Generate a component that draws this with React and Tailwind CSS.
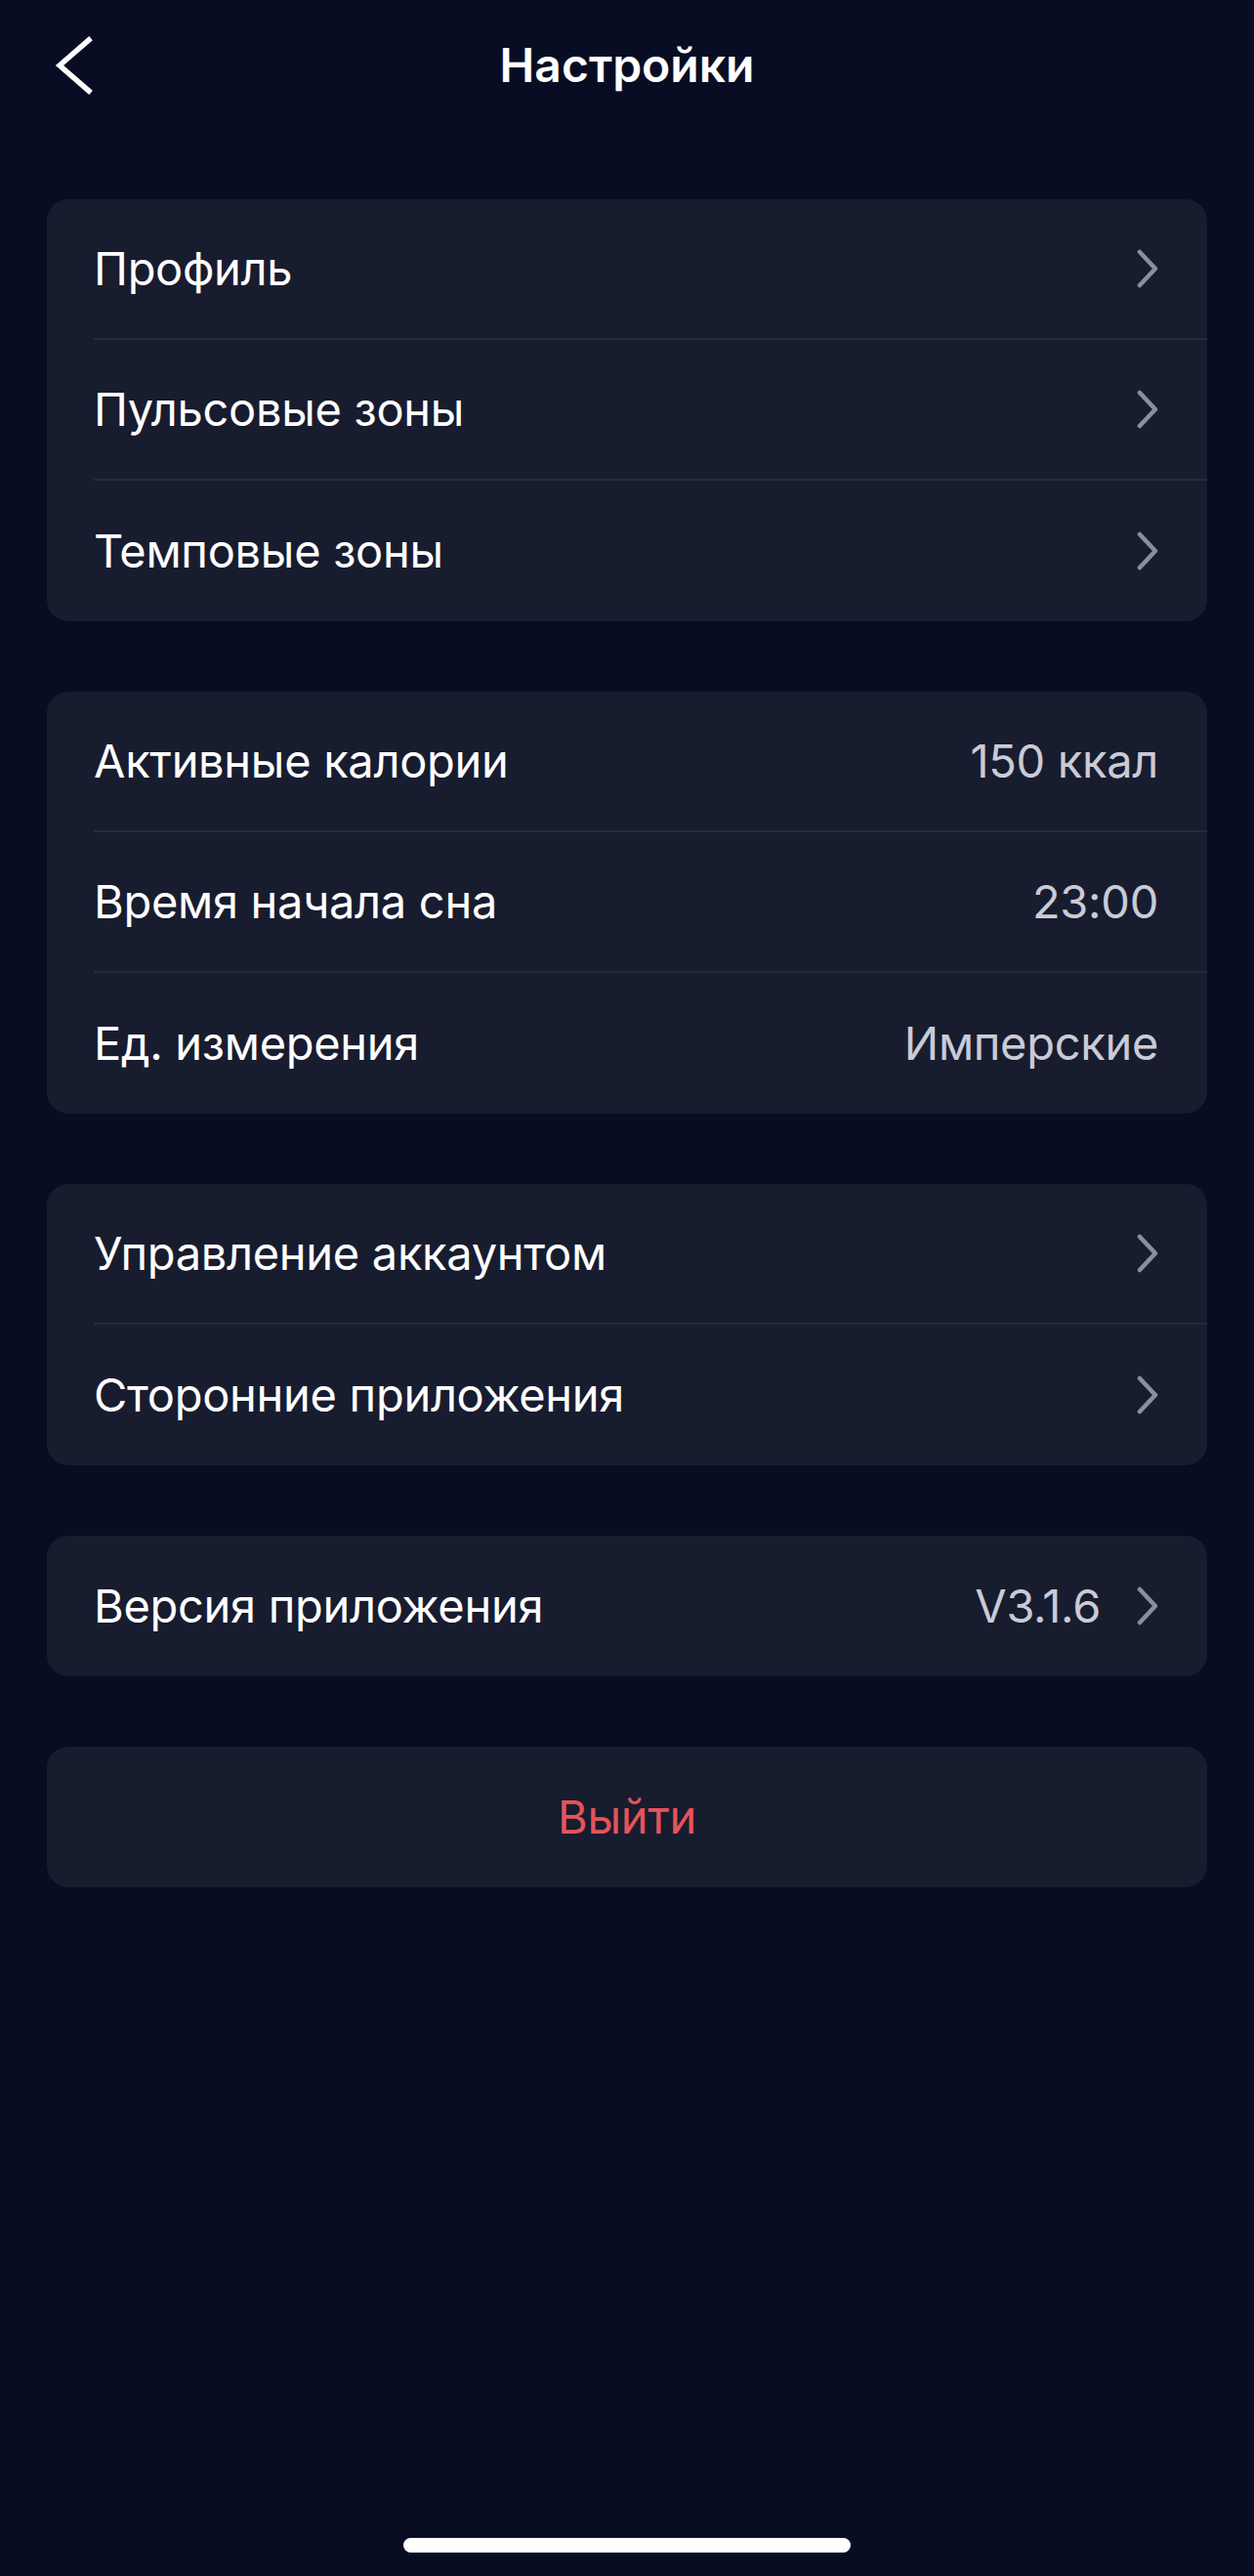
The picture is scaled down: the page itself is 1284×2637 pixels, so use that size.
import React from 'react';

const Chevron = () => (
  <svg width="22" height="40" viewBox="0 0 22 40" fill="none" className="shrink-0">
    <path d="M3 3 L19 20 L3 37" stroke="#8b8e9f" strokeWidth="4.5" strokeLinecap="round" strokeLinejoin="round" />
  </svg>
);

const Row = ({ label, value, arrow, last }) => (
  <div className="h-[144px] pl-[48px] flex">
    <div
      className={`flex-1 flex items-center justify-between pr-[50px] ${last ? '' : 'border-b-2 border-[#262a3d]'}`}
    >
      <span className="text-[47px] text-white tracking-[-0.3px]">{label}</span>
      <div className="flex items-center gap-[37px]">
        {value && <span className="text-[47px] text-[#c9cbd6] tracking-[-0.3px]">{value}</span>}
        {arrow && <Chevron />}
      </div>
    </div>
  </div>
);

const Card = ({ rows }) => (
  <div className="bg-[#181c2f] rounded-[22px] overflow-hidden">
    {rows.map((r, i) => (
      <Row key={r.label} {...r} last={i === rows.length - 1} />
    ))}
  </div>
);

const App = () => {
  const groups = [
    [
      { label: 'Профиль', arrow: true },
      { label: 'Пульсовые зоны', arrow: true },
      { label: 'Темповые зоны', arrow: true },
    ],
    [
      { label: 'Активные калории', value: '150 ккал' },
      { label: 'Время начала сна', value: '23:00' },
      { label: 'Ед. измерения', value: 'Имперские' },
    ],
    [
      { label: 'Управление аккаунтом', arrow: true },
      { label: 'Сторонние приложения', arrow: true },
    ],
    [{ label: 'Версия приложения', value: 'V3.1.6', arrow: true }],
  ];

  return (
    <div className="min-h-[2637px] bg-[#080d23] flex flex-col font-['Inter','Noto_Sans',sans-serif]">
      {/* Header */}
      <div className="h-[134px] grid grid-cols-[1fr_auto_1fr] items-center">
        <div className="pl-[55px] flex items-center">
          <svg width="40" height="60" viewBox="0 0 40 60" fill="none">
            <path d="M36 4 L6 30 L36 56" stroke="white" strokeWidth="5.5" strokeLinecap="square" />
          </svg>
        </div>
        <h1 className="text-[48px] font-semibold text-white">Настройки</h1>
        <div />
      </div>

      {/* Settings groups */}
      <div className="px-[48px] pt-[70px] flex flex-col gap-[72px]">
        {groups.map((rows, i) => (
          <Card key={i} rows={rows} />
        ))}
        <button className="h-[144px] bg-[#181c2f] rounded-[22px] text-[47px] text-[#e5545b] tracking-[-0.3px]">
          Выйти
        </button>
      </div>

      <div className="flex-1" />
      {/* Home indicator */}
      <div className="flex justify-center pb-[24px]">
        <div className="w-[458px] h-[15px] rounded-full bg-white" />
      </div>
    </div>
  );
};

export default App;
